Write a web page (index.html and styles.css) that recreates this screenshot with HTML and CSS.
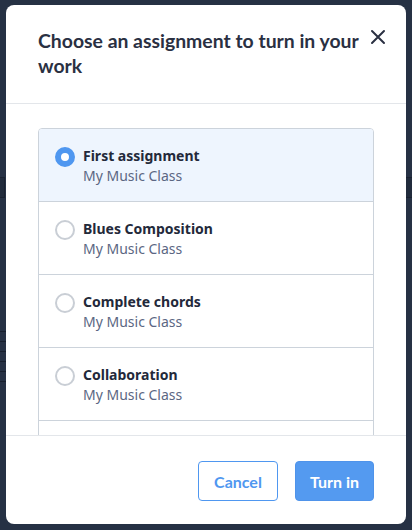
FILE: index.html
```html
<!DOCTYPE html>
<html>
<head>
<meta charset="utf-8">
<link rel="stylesheet" href="styles.css">
</head>
<body>
<div class="backdrop">
  <div class="bg-bar bar-a"></div>
  <div class="bg-bar bar-b"></div>
  <div class="bg-lines"></div>
</div>
<div class="modal">
  <div class="modal-header">
    <h2 class="modal-title">Choose an assignment to turn in your work</h2>
    <button class="close-btn" aria-label="Close">
      <svg width="16" height="16" viewBox="0 0 16 16"><path d="M2 2 L14 14 M14 2 L2 14" stroke="#2a3042" stroke-width="2" stroke-linecap="round"/></svg>
    </button>
  </div>
  <div class="modal-body">
    <ul class="assignment-list">
      <li class="item selected">
        <span class="radio"></span>
        <div class="item-text"><div class="item-title">First assignment</div><div class="item-sub">My Music Class</div></div>
      </li>
      <li class="item">
        <span class="radio"></span>
        <div class="item-text"><div class="item-title">Blues Composition</div><div class="item-sub">My Music Class</div></div>
      </li>
      <li class="item">
        <span class="radio"></span>
        <div class="item-text"><div class="item-title">Complete chords</div><div class="item-sub">My Music Class</div></div>
      </li>
      <li class="item">
        <span class="radio"></span>
        <div class="item-text"><div class="item-title">Collaboration</div><div class="item-sub">My Music Class</div></div>
      </li>
      <li class="item item-more"></li>
    </ul>
  </div>
  <div class="modal-footer">
    <button class="btn btn-outline">Cancel</button>
    <button class="btn btn-primary">Turn in</button>
  </div>
</div>
</body>
</html>
```
FILE: styles.css
```css
* { box-sizing: border-box; }
html, body { margin: 0; padding: 0; }
body {
  width: 412px;
  height: 530px;
  background: #263144;
  overflow: hidden;
  position: relative;
  padding: 5px 6px 6px 6px;
}
.backdrop { position: absolute; inset: 0; }
.bg-bar {
  position: absolute;
  top: 177px;
  height: 21px;
  border: 1px solid #1a2231;
  background: #212b3c;
}
.bar-a { left: -4px; width: 9px; }
.bar-b { left: 404px; width: 12px; }
.bg-lines {
  position: absolute;
  left: 0;
  top: 322px;
  width: 6px;
  height: 60px;
  background: repeating-linear-gradient(#263144 0 9px, #171f2d 9px 10px);
}
.modal {
  position: relative;
  width: 400px;
  height: 519px;
  background: #fff;
  border-radius: 8px;
  display: flex;
  flex-direction: column;
  overflow: hidden;
}
.modal-header {
  display: flex;
  align-items: flex-start;
  justify-content: space-between;
  padding: 23px 20px 25px 32px;
  border-bottom: 1px solid #e3e6ea;
}
.modal-title {
  margin: 0;
  width: 330px;
  font-family: "Lato", "Open Sans", sans-serif;
  font-weight: 700;
  font-size: 19.4px;
  line-height: 25px;
  color: #2a3042;
}
.close-btn {
  border: 0;
  background: none;
  padding: 0;
  margin-top: 1px;
  width: 16px;
  height: 16px;
  cursor: pointer;
}
.close-btn svg { display: block; }
.modal-body {
  flex: 1;
  overflow: hidden;
  padding: 24px 32px 0 32px;
}
.assignment-list {
  list-style: none;
  margin: 0;
  padding: 0;
  border: 1px solid #ccd3db;
  border-radius: 4px;
  overflow: hidden;
}
.item {
  display: flex;
  align-items: center;
  gap: 8px;
  height: 73px;
  padding: 2px 16px 0 16px;
  border-top: 1px solid #ccd3db;
  font-family: "Noto Sans", "Open Sans", sans-serif;
}
.item:first-child { border-top: 0; height: 72px; }
.item.selected { background: #eef5fe; }
.radio {
  width: 20px;
  height: 20px;
  border-radius: 50%;
  border: 2px solid #c9ced5;
  background: #fff;
  flex: none;
  margin-top: -18px;
}
.item.selected .radio { border: 6px solid #4f97f0; }
.item-title {
  font-size: 14px;
  font-weight: 700;
  line-height: 20px;
  color: #23293a;
}
.item-sub {
  font-size: 14px;
  line-height: 20px;
  color: #5b6783;
}
.modal-footer {
  display: flex;
  justify-content: flex-end;
  gap: 17px;
  padding: 25px 32px 23px 32px;
  border-top: 1px solid #e3e6ea;
}
.btn {
  height: 40px;
  border-radius: 4px;
  font-family: "Lato", "Open Sans", sans-serif;
  font-weight: 700;
  font-size: 16px;
  cursor: pointer;
}
.btn-outline {
  width: 80px;
  background: #fff;
  border: 1px solid #4f97f0;
  color: #4f97f0;
}
.btn-primary {
  width: 79px;
  background: #549af0;
  border: 1px solid #4f93ea;
  color: #fff;
}
```
